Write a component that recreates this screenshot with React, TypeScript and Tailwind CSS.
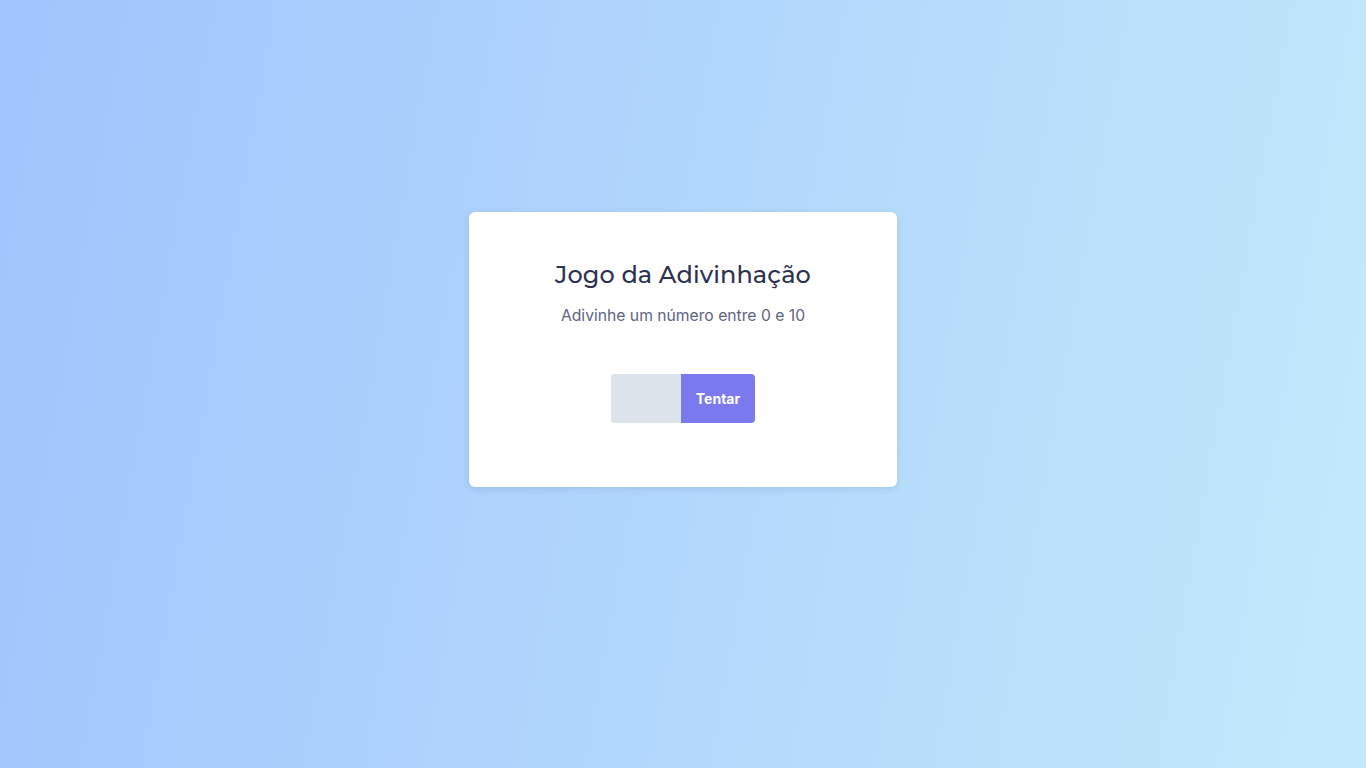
import React from "react";

export default function App() {
  return (
    <div className="w-full h-[768px] flex items-center justify-center pb-[69px] bg-[linear-gradient(100deg,#a1c4fd_0%,#c2e9fb_100%)] font-['Inter','Lato',sans-serif]">
      <div className="w-[428px] h-[275px] bg-white rounded-[6px] shadow-[0_2px_6px_rgba(60,80,140,0.15)] flex flex-col items-center pt-[47px]">
        <h1 className="text-[24px] leading-[32px] font-medium text-[#2d3250] font-['Montserrat','Inter',sans-serif] tracking-[0.1px]">
          Jogo da Adivinhação
        </h1>
        <p className="mt-[13px] text-[15.7px] leading-[24px] text-[#5e6380]">
          Adivinhe um número entre 0 e 10
        </p>
        <div className="mt-[46px] flex rounded-[4px] overflow-hidden">
          <input className="w-[70px] h-[49px] bg-[#dce3ea] outline-none border-0 px-2" />
          <button className="w-[74px] h-[49px] bg-[#7a7aee] text-white font-bold text-[14px]">
            Tentar
          </button>
        </div>
      </div>
    </div>
  );
}
